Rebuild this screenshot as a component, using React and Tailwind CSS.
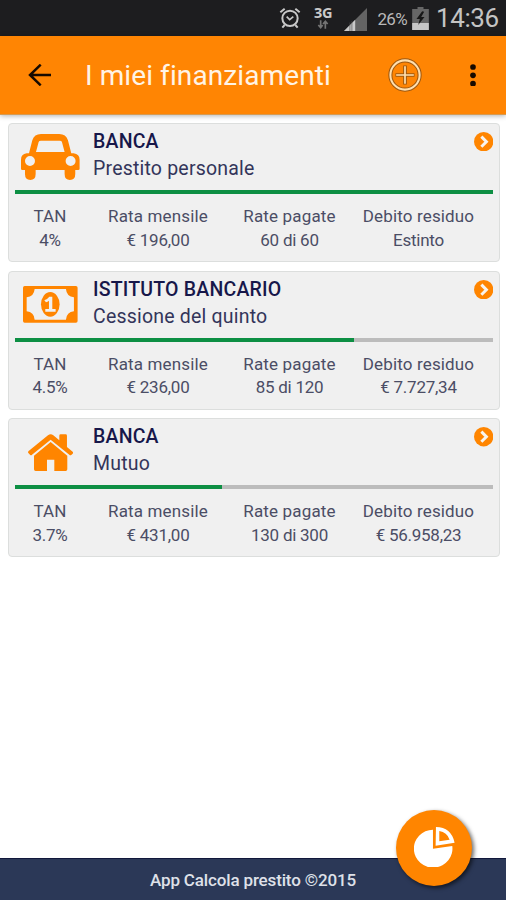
import React from "react";

function CarIcon() {
  return (
    <svg viewBox="0 0 176 138" className="h-[46px] w-[58.6px]" fill="#ff8500">
      <path
        fillRule="evenodd"
        d="M0 77Q0 60 17 58H24L34 19Q40 0 60 0H115Q135 0 141 19L151 58H158Q176 60 176 77V105Q176 108 172 108H163V120Q163 138 147 138Q131 138 131 120V108H44V120Q44 138 28 138Q12 138 12 120V108H4Q0 108 0 105ZM45 54H131L123 24Q122 20 116 20H60Q54 20 53 24ZM27 66A15 15 0 1 0 27 96A15 15 0 1 0 27 66ZM149 66A15 15 0 1 0 149 96A15 15 0 1 0 149 66Z"
      />
    </svg>
  );
}

function MoneyIcon() {
  return (
    <svg viewBox="0 0 164 110" className="h-[36.7px] w-[54.6px]" fill="#ff8500">
      <path
        fillRule="evenodd"
        d="M5 0H159Q164 0 164 5V105Q164 110 159 110H5Q0 110 0 105V5Q0 0 5 0ZM35 9Q33 32 11 34V76Q33 78 35 101H129Q131 78 153 76V34Q131 32 129 9Z"
      />
      <ellipse cx="82" cy="55" rx="28" ry="37" />
      <path d="M79 32H88V69H98V77H67V69H78V44Q74 48 69 49L64 43Q74 39 79 32Z" fill="#f0f0f0" />
    </svg>
  );
}

function HouseIcon() {
  return (
    <svg viewBox="0 0 136 112" className="h-[37.3px] w-[45.3px]" fill="#ff8500">
      <path d="M68 24L118 65V106Q118 111 113 111H79V77H57V111H23Q18 111 18 106V65Z" />
      <path d="M60 4Q68-2 76 4L94 19V5Q94 1 98 1H113Q117 1 117 5V39L134 53Q137 56 134 59L130 63Q127 65 124 62L68 17L12 62Q9 65 6 62L1 57Q-1 54 2 51Z" />
    </svg>
  );
}

function ChevronBadge() {
  return (
    <svg viewBox="0 0 58 58" className="h-[19.4px] w-[19.4px]">
      <circle cx="29" cy="29" r="29" fill="#ff8500" />
      <path d="M22 14L37 29L22 44" fill="none" stroke="#f8f4ee" strokeWidth="9" />
    </svg>
  );
}

function StatusBar() {
  return (
    <div className="flex h-9 items-center bg-[#1d1d1f] pl-[279px] text-[#b9b9b9]">
      <svg viewBox="0 0 66 66" className="h-[22px] w-[22px] shrink-0" fill="none" stroke="#c8c8c8" strokeWidth="6">
        <circle cx="33" cy="34" r="23" />
        <path d="M4 16L17 5M62 16L49 5M17 54L10 62M49 54L56 62" />
        <path d="M23 29L32 38L43 29" strokeWidth="5" />
      </svg>
      <div className="ml-[12px] flex w-[20px] flex-col items-center">
        <span className="font-[Open_Sans,sans-serif] text-[14.5px] leading-[15px] font-bold tracking-[-0.3px] text-[#cacaca]">3G</span>
        <svg viewBox="0 0 34 27" className="mb-[2px] h-[9px] w-[12px]" fill="none" stroke="#747474" strokeWidth="5">
          <path d="M10 1V23M3 15L10 23L16 15M24 26V4M17 12L24 4L31 12" />
        </svg>
      </div>
      <svg viewBox="0 0 70 70" className="mt-[3px] ml-[11px] h-[23px] w-[23px] shrink-0">
        <path d="M70 0V70H0Z" fill="#646464" />
        <path d="M34 36V70H0Z" fill="#c9c9c9" />
        <path d="M18 44V70M24 40V70" stroke="#4c4c4c" strokeWidth="2" />
      </svg>
      <span className="ml-[10.5px] w-[31px] pt-[1px] text-[17px] leading-5 tracking-[-0.7px] whitespace-nowrap">26%</span>
      <svg viewBox="0 0 50 69" className="ml-[3px] h-[23px] w-[17px] shrink-0">
        <path d="M16 0H34V6H50V69H0V6H16Z" fill="#666" />
        <path d="M0 48H50V69H0Z" fill="#c7c7c7" />
        <path d="M30 13L13 36H23L18 54L37 30H27L36 14Z" fill="#171717" />
      </svg>
      <span className="ml-[7.5px] text-[26px] leading-8 tracking-[-0.4px] whitespace-nowrap text-[#c4c4c4]">14:36</span>
    </div>
  );
}

function Header() {
  return (
    <header className="relative flex h-[79px] items-center border-b border-[#d69a51] bg-[#ff8503] shadow-[0_1px_5px_rgba(0,0,0,0.3)]">
      <svg viewBox="0 0 70 66" className="ml-[28px] h-[22px] w-[23.4px]" fill="none" stroke="#160a00" strokeWidth="7.5">
        <path d="M70 33H5M38 2L6 33L38 64" />
      </svg>
      <h1 className="ml-[33.5px] w-[270px] pt-[2px] text-[28px] leading-9 tracking-[0.1px] whitespace-nowrap text-[#fff4e6]">
        I miei finanziamenti
      </h1>
      <svg viewBox="0 0 100 100" className="ml-[33.5px] h-[34px] w-[34px]" fill="none">
        <circle cx="50" cy="50" r="43" stroke="#9d5811" strokeWidth="12" />
        <circle cx="50" cy="50" r="43" stroke="#ffdfae" strokeWidth="6" />
        <path d="M50 22V78M22 50H78" stroke="#9d5811" strokeWidth="11" />
        <path d="M50 24V76M24 50H76" stroke="#ffdfae" strokeWidth="5" />
      </svg>
      <svg viewBox="0 0 18 68" className="ml-[47.5px] h-[22.7px] w-[6px]" fill="#160a00">
        <circle cx="9" cy="9" r="8.5" />
        <circle cx="9" cy="34" r="8.5" />
        <circle cx="9" cy="59" r="8.5" />
      </svg>
    </header>
  );
}

const loans = [
  {
    icon: <CarIcon />,
    bank: "BANCA",
    kind: "Prestito personale",
    progress: 100,
    tan: "4%",
    monthly: "€ 196,00",
    paid: "60 di 60",
    debt: "Estinto",
  },
  {
    icon: <MoneyIcon />,
    bank: "ISTITUTO BANCARIO",
    kind: "Cessione del quinto",
    progress: 70.9,
    tan: "4.5%",
    monthly: "€ 236,00",
    paid: "85 di 120",
    debt: "€ 7.727,34",
  },
  {
    icon: <HouseIcon />,
    bank: "BANCA",
    kind: "Mutuo",
    progress: 43.4,
    tan: "3.7%",
    monthly: "€ 431,00",
    paid: "130 di 300",
    debt: "€ 56.958,23",
  },
];

function Stat({ label, value }) {
  return (
    <div className="text-center whitespace-nowrap">
      <div className="tracking-[0.15px]">{label}</div>
      <div className="tracking-[-0.25px]">{value}</div>
    </div>
  );
}

function LoanCard({ loan }) {
  return (
    <article className="h-[139px] rounded-[4px] border border-[#dcdedd] bg-[#f0f0f0] px-[5.5px] text-[#4b4d65]">
      <div className="flex h-[66px]">
        <div className="flex h-[66px] w-[72px] items-center justify-center">{loan.icon}</div>
        <div className="ml-[6.5px] flex-1 pt-[4px] whitespace-nowrap">
          <h2 className="text-[19.5px] leading-[27px] font-medium tracking-[0.2px] text-[#17174a]">{loan.bank}</h2>
          <p className="text-[19.5px] leading-[27px] tracking-[0.2px] text-[#33355a]">{loan.kind}</p>
        </div>
        <div className="pt-[8px]">
          <ChevronBadge />
        </div>
      </div>
      <div className="h-[4px] bg-[#bcbcbc]">
        <div className="h-full bg-[#0d8f43]" style={{ width: `${loan.progress}%` }} />
      </div>
      <div className="grid grid-cols-[71px_145px_118px_140px] pt-[11px] text-[17px] leading-[23.5px]">
        <Stat label="TAN" value={loan.tan} />
        <Stat label="Rata mensile" value={loan.monthly} />
        <Stat label="Rate pagate" value={loan.paid} />
        <Stat label="Debito residuo" value={loan.debt} />
      </div>
    </article>
  );
}

export default function App() {
  return (
    <div className="relative flex h-[900px] w-[506px] flex-col overflow-hidden bg-white font-[Roboto,sans-serif]">
      <StatusBar />
      <Header />
      <main className="flex flex-1 flex-col gap-[8.7px] pt-[8px] pr-[6.5px] pl-[8px]">
        {loans.map((loan, i) => (
          <LoanCard key={i} loan={loan} />
        ))}
      </main>
      <footer className="flex h-[42px] items-center justify-center border-t border-[#11183b] bg-[#2b3857] pt-[2px] text-[17px] font-medium tracking-[-0.15px] text-[#dfe1e9]">
        App Calcola prestito ©2015
      </footer>
      <button
        aria-label="Grafico"
        className="absolute top-[810px] left-[396px] flex h-[76px] w-[76px] items-center justify-center rounded-full bg-[#ff8500] pb-[2px] pl-px shadow-[2px_2px_4px_rgba(0,0,0,0.6)]"
      >
        <svg viewBox="0 0 122 122" className="h-[40.6px] w-[40.6px]" fill="#fff">
          <path d="M57 8V65L115 57A58 57 0 1 1 57 8Z" />
          <path fillRule="evenodd" d="M66 0Q112 1 122 47L65 56ZM76 12V43L107 38Q99 15 76 12Z" />
        </svg>
      </button>
    </div>
  );
}
